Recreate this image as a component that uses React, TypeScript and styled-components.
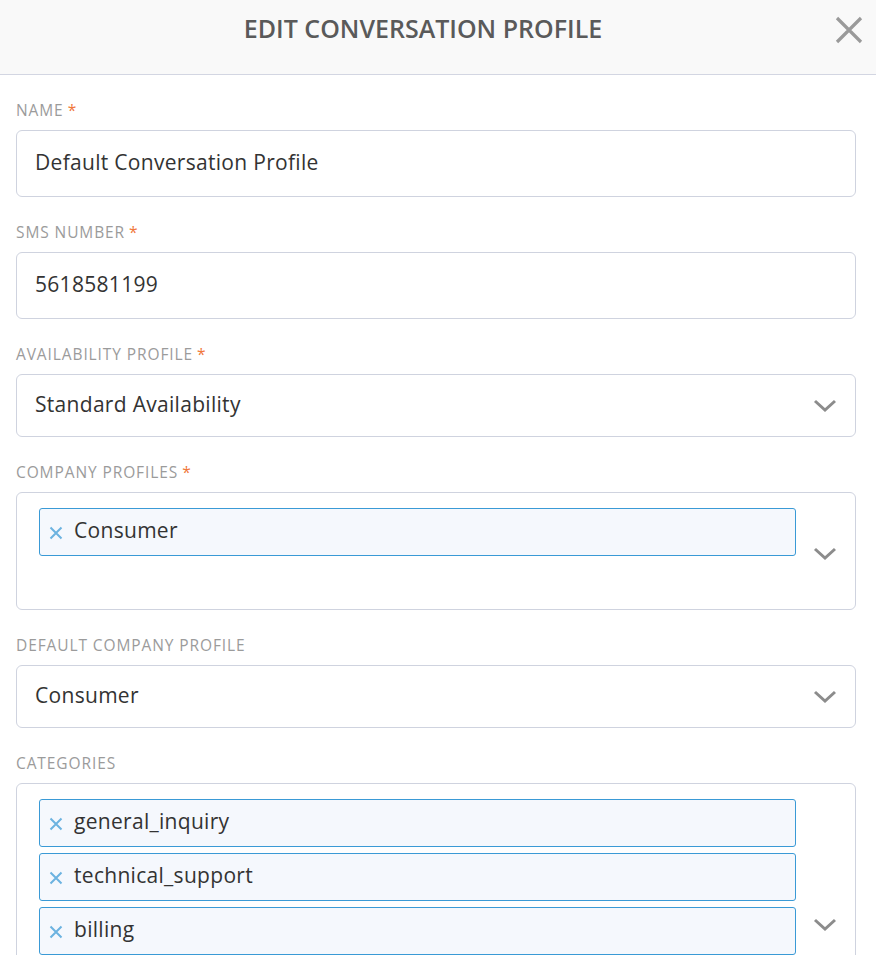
import React, { FunctionComponent } from 'react';
import styled, { createGlobalStyle } from 'styled-components';

const GlobalStyle = createGlobalStyle`
  html, body {
    margin: 0;
    padding: 0;
    overflow: hidden;
    background: #ffffff;
  }
  body {
    font-family: 'Open Sans', 'Liberation Sans', sans-serif;
  }
`;

const Modal = styled.div`
  width: 876px;
  height: 955px;
  overflow: hidden;
  background: #ffffff;
`;

const Header = styled.div`
  position: relative;
  height: 74px;
  display: flex;
  align-items: center;
  justify-content: center;
  padding-right: 30px;
  background: #f9f9f9;
  border-bottom: 1px solid #d3d6e2;
`;

const Title = styled.h1`
  margin: 0 0 18px;
  font-size: 25px;
  font-weight: 600;
  color: #5a5a5a;
`;

const CloseButton = styled.button`
  position: absolute;
  top: 15px;
  right: 12px;
  width: 30px;
  height: 30px;
  padding: 0;
  border: none;
  background: none;
  cursor: pointer;
`;

const Form = styled.div`
  padding: 25px 20px 0 16px;
  display: flex;
  flex-direction: column;
  gap: 25px;
`;

const Field = styled.div`
  display: flex;
  flex-direction: column;
  gap: 10px;
`;

const Label = styled.label`
  font-size: 15.5px;
  line-height: 20px;
  letter-spacing: 0.9px;
  color: #9b9b9b;
  text-transform: uppercase;
`;

const Required = styled.span`
  color: #f0773a;
  margin-left: 4px;
`;

const Box = styled.div<{ $height: number }>`
  box-sizing: border-box;
  height: ${(p) => p.$height}px;
  border: 1px solid #cfd3df;
  border-radius: 6px;
  display: flex;
  align-items: center;
  padding: 0 18px;
  font-size: 21px;
  letter-spacing: 0.3px;
  color: #333333;
`;

const Value = styled.span`
  flex: 1;
  margin-top: -3px;
`;

const MultiBox = styled.div<{ $height: number }>`
  box-sizing: border-box;
  height: ${(p) => p.$height}px;
  border: 1px solid #cfd3df;
  border-radius: 6px;
  display: flex;
  align-items: flex-start;
  padding: 15px 18px 0 22px;
`;

const TagList = styled.div`
  flex: 1;
  display: flex;
  flex-direction: column;
  gap: 6px;
  margin-right: 17px;
`;

const Tag = styled.div`
  box-sizing: border-box;
  height: 48px;
  display: flex;
  align-items: center;
  gap: 11px;
  padding: 0 9px 4px;
  background: #f5f8fd;
  border: 1px solid #3a9ad6;
  border-radius: 3px;
  font-size: 21px;
  letter-spacing: 0.3px;
  color: #333333;
`;

const RemoveSlot = styled.span`
  display: flex;
  margin-top: 6px;
`;

const ChevronSlot = styled.div<{ $top: number }>`
  align-self: flex-start;
  margin-top: ${(p) => p.$top}px;
`;

const Chevron: FunctionComponent = () => (
  <svg width="24" height="14" viewBox="0 0 24 14">
    <path d="M2 2 L12 11 L22 2" fill="none" stroke="#8c8c8c" strokeWidth="3" />
  </svg>
);

const RemoveIcon: FunctionComponent = () => (
  <RemoveSlot>
    <svg width="14" height="14" viewBox="0 0 14 14">
      <path d="M1.5 1.5 L12.5 12.5 M12.5 1.5 L1.5 12.5" stroke="#6cb3e0" strokeWidth="2" />
    </svg>
  </RemoveSlot>
);

const FieldLabel: FunctionComponent<{ text: string; required?: boolean }> = ({ text, required }) => (
  <Label>
    {text}
    {required && <Required>*</Required>}
  </Label>
);

const TagBox: FunctionComponent<{ tags: string[]; height: number; chevronTop: number }> = ({
  tags,
  height,
  chevronTop,
}) => (
  <MultiBox $height={height}>
    <TagList>
      {tags.map((tag) => (
        <Tag key={tag}>
          <RemoveIcon />
          {tag}
        </Tag>
      ))}
    </TagList>
    <ChevronSlot $top={chevronTop}>
      <Chevron />
    </ChevronSlot>
  </MultiBox>
);

const App: FunctionComponent = () => (
  <Modal>
    <GlobalStyle />
    <Header>
      <Title>EDIT CONVERSATION PROFILE</Title>
      <CloseButton aria-label="Close">
        <svg width="30" height="30" viewBox="0 0 30 30">
          <path d="M3 3 L27 27 M27 3 L3 27" stroke="#9a9a9a" strokeWidth="3.2" />
        </svg>
      </CloseButton>
    </Header>
    <Form>
      <Field>
        <FieldLabel text="Name" required />
        <Box $height={67}>
          <Value>Default Conversation Profile</Value>
        </Box>
      </Field>
      <Field>
        <FieldLabel text="SMS Number" required />
        <Box $height={67}>
          <Value>5618581199</Value>
        </Box>
      </Field>
      <Field>
        <FieldLabel text="Availability Profile" required />
        <Box $height={63}>
          <Value>Standard Availability</Value>
          <Chevron />
        </Box>
      </Field>
      <Field>
        <FieldLabel text="Company Profiles" required />
        <TagBox tags={['Consumer']} height={118} chevronTop={36} />
      </Field>
      <Field>
        <FieldLabel text="Default Company Profile" />
        <Box $height={63}>
          <Value>Consumer</Value>
          <Chevron />
        </Box>
      </Field>
      <Field>
        <FieldLabel text="Categories" />
        <TagBox tags={['general_inquiry', 'technical_support', 'billing']} height={240} chevronTop={116} />
      </Field>
    </Form>
  </Modal>
);

export default App;
